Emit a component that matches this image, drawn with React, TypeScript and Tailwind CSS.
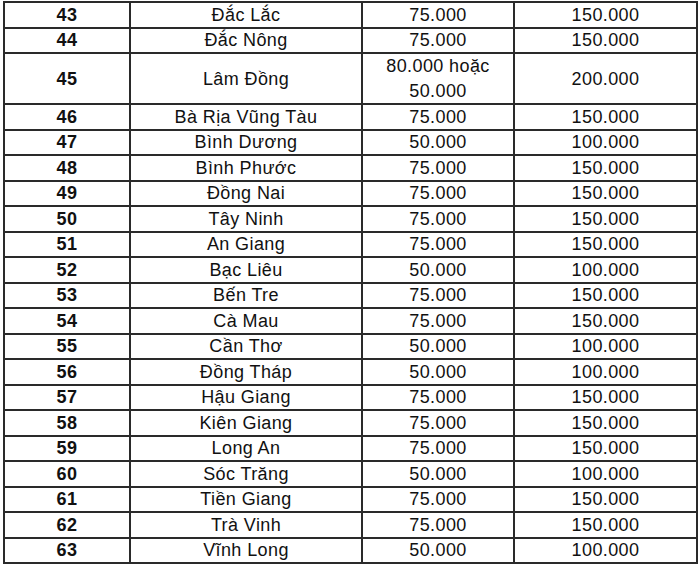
import React from 'react';

type Row = { no: number; name: string; a: string[]; b: string };

const rows: Row[] = [
  { no: 43, name: 'Đắc Lắc', a: ['75.000'], b: '150.000' },
  { no: 44, name: 'Đắc Nông', a: ['75.000'], b: '150.000' },
  { no: 45, name: 'Lâm Đồng', a: ['80.000 hoặc', '50.000'], b: '200.000' },
  { no: 46, name: 'Bà Rịa Vũng Tàu', a: ['75.000'], b: '150.000' },
  { no: 47, name: 'Bình Dương', a: ['50.000'], b: '100.000' },
  { no: 48, name: 'Bình Phước', a: ['75.000'], b: '150.000' },
  { no: 49, name: 'Đồng Nai', a: ['75.000'], b: '150.000' },
  { no: 50, name: 'Tây Ninh', a: ['75.000'], b: '150.000' },
  { no: 51, name: 'An Giang', a: ['75.000'], b: '150.000' },
  { no: 52, name: 'Bạc Liêu', a: ['50.000'], b: '100.000' },
  { no: 53, name: 'Bến Tre', a: ['75.000'], b: '150.000' },
  { no: 54, name: 'Cà Mau', a: ['75.000'], b: '150.000' },
  { no: 55, name: 'Cần Thơ', a: ['50.000'], b: '100.000' },
  { no: 56, name: 'Đồng Tháp', a: ['50.000'], b: '100.000' },
  { no: 57, name: 'Hậu Giang', a: ['75.000'], b: '150.000' },
  { no: 58, name: 'Kiên Giang', a: ['75.000'], b: '150.000' },
  { no: 59, name: 'Long An', a: ['75.000'], b: '150.000' },
  { no: 60, name: 'Sóc Trăng', a: ['50.000'], b: '100.000' },
  { no: 61, name: 'Tiền Giang', a: ['75.000'], b: '150.000' },
  { no: 62, name: 'Trà Vinh', a: ['75.000'], b: '150.000' },
  { no: 63, name: 'Vĩnh Long', a: ['50.000'], b: '100.000' },
];

const cell = 'border-2 border-[#2a2a2a] text-center align-middle p-0 leading-[22px]';

const App: React.FC = () => {
  return (
    <div className="w-[700px] h-[567px] bg-white pl-[3px] pt-px overflow-hidden text-[#111] font-['Liberation_Sans',Arial,sans-serif] text-[18px] tracking-[0.4px]">
      <table className="border-collapse table-fixed w-[693px]">
        <colgroup>
          <col className="w-[126px]" />
          <col className="w-[232px]" />
          <col className="w-[152px]" />
          <col className="w-[183px]" />
        </colgroup>
        <tbody>
          {rows.map(r => (
            <tr key={r.no} className={r.a.length > 1 ? 'h-[51px]' : 'h-[25.5px]'}>
              <td className={`${cell} font-bold`}>{r.no}</td>
              <td className={cell}>{r.name}</td>
              <td className={cell}>
                {r.a.map(line => (
                  <div key={line} className={r.a.length > 1 ? 'leading-[24.5px]' : ''}>{line}</div>
                ))}
              </td>
              <td className={cell}>{r.b}</td>
            </tr>
          ))}
        </tbody>
      </table>
    </div>
  );
};

export default App;
